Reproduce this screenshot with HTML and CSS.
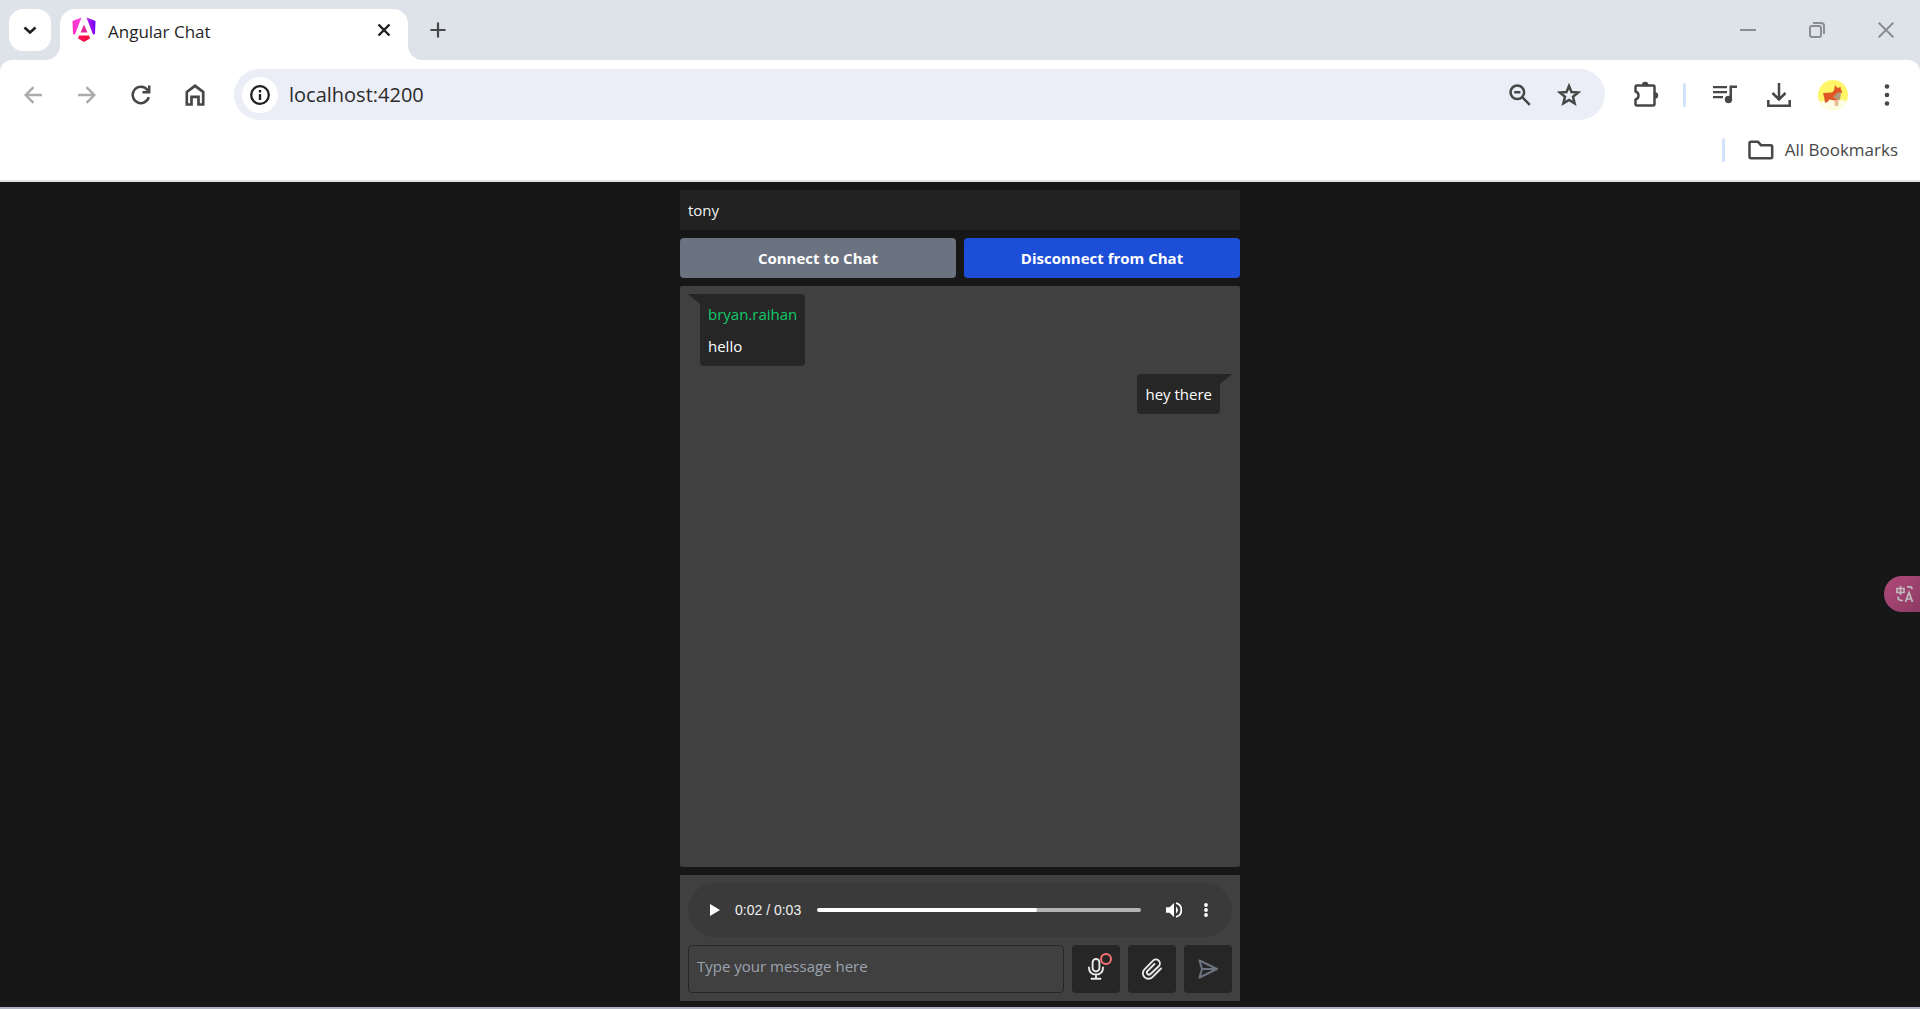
FILE: index.html
```
<!DOCTYPE html>
<html lang="en">
<head>
<meta charset="utf-8">
<meta name="viewport" content="width=device-width, initial-scale=1">
<title>Angular Chat</title>
<link rel="stylesheet" href="styles.css">
</head>
<body>
<div class="window">
  <header class="browser">
    <div class="tab-strip">
      <button class="tab-search" aria-label="Search tabs"><svg width="14" height="14" viewBox="0 0 14 14"><path d="M1.500 4.500 7 9.500l5.500-5" fill="none" stroke="#1f1f1f" stroke-width="2.600"/></svg></button>
      <div class="tab">
        <svg class="favicon" width="24" height="26" viewBox="0 0 24 26">
          <defs>
            <linearGradient id="ngA" gradientUnits="userSpaceOnUse" x1="0" y1="14" x2="24" y2="10"><stop offset="0" stop-color="#ff2fc0"/><stop offset=".4" stop-color="#ff41e0"/><stop offset=".7" stop-color="#b01cf0"/><stop offset="1" stop-color="#6c00f5"/></linearGradient>
            <linearGradient id="ngB" x1="0" y1="0" x2="1" y2="0"><stop offset="0" stop-color="#ff1060"/><stop offset="1" stop-color="#f0103a"/></linearGradient>
          </defs>
          <path d="M.500 4 9.500 .500 3 17.500 1 17zM14.500 .500l9 3.500-.500 13-2 .500z" fill="url(#ngA)"/>
          <path d="M12 7.500 15.500 15.500h-7z" fill="#e0289a"/>
          <path d="M7 18.500h10l1 3-6 3.500-6-3.500z" fill="url(#ngB)"/>
        </svg>
        <span class="tab-title">Angular Chat</span>
        <button class="tab-close" aria-label="Close tab"><svg width="14" height="14" viewBox="0 0 14 14"><path d="m1.500 1.500 11 11m0-11-11 11" stroke="#1f1f1f" stroke-width="2.400"/></svg></button>
      </div>
      <button class="new-tab" aria-label="New tab"><svg width="16" height="16" viewBox="0 0 16 16"><path d="M8 .500v15M.500 8h15" stroke="#474747" stroke-width="2.200"/></svg></button>
      <div class="window-controls">
        <button aria-label="Minimize"><svg width="16" height="16" viewBox="0 0 16 16"><path d="M0 8h16" stroke="#8a8d91" stroke-width="2"/></svg></button>
        <button aria-label="Restore"><svg width="16" height="16" viewBox="0 0 16 16" fill="none" stroke="#8a8d91" stroke-width="2"><rect x="1" y="4" width="11" height="11" rx="2"/><path d="M4 1h8q3 0 3 3v8"/></svg></button>
        <button aria-label="Close"><svg width="16" height="16" viewBox="0 0 16 16"><path d="m.700.700 14.600 14.600m0-14.600L.700 15.300" stroke="#8a8d91" stroke-width="2"/></svg></button>
      </div>
    </div>

    <div class="toolbar">
      <button class="tool" aria-label="Back"><svg width="18" height="18" viewBox="0 0 18 18" fill="none" stroke="#ababab" stroke-width="2.400"><path d="M18 9H1.800M9.500 1.200 1.700 9l7.800 7.800"/></svg></button>
      <button class="tool" aria-label="Forward"><svg width="18" height="18" viewBox="0 0 18 18" fill="none" stroke="#ababab" stroke-width="2.400"><path d="M0 9h16.200M8.500 1.200 16.300 9l-7.800 7.800"/></svg></button>
      <button class="tool" aria-label="Reload"><svg width="20" height="20" viewBox="0 0 20 20" fill="none" stroke="#474747" stroke-width="2.500"><path d="M17.800 12.200A8.200 8.200 0 1 1 16.500 5l1.200 1.700M18.200.500v6.700h-6.700"/></svg></button>
      <button class="tool" aria-label="Home"><svg width="20" height="22" viewBox="0 0 20 22" fill="none" stroke="#474747" stroke-width="2.700"><path d="M1.800 8 10 1.800 18.200 8v12.500h-4.700v-7.700h-7v7.700H1.800z"/></svg></button>
      <div class="omnibox">
        <button class="site-info" aria-label="Site information"><svg width="20" height="20" viewBox="0 0 20 20"><circle cx="10" cy="10" r="8.800" fill="none" stroke="#1f1f1f" stroke-width="2.300"/><path d="M8.800 9h2.400v6H8.800zM8.800 5h2.400v2.400H8.800z" fill="#1f1f1f"/></svg></button>
        <input class="address" type="text" value="localhost:4200" aria-label="Address">
        <button class="omni-tool" aria-label="Zoom"><svg width="22" height="22" viewBox="0 0 22 22" fill="none" stroke="#474747" stroke-width="2.500"><circle cx="8.300" cy="8.300" r="6.800"/><path d="m13.200 13.200 7.600 7.600M5.200 8.300h6.200"/></svg></button>
        <button class="omni-tool" aria-label="Bookmark this page"><svg width="24" height="24" viewBox="0 0 24 24" fill="none" stroke="#474747" stroke-width="2.500"><path d="m12 3 2.500 6.100 6.500.500-5 4.200 1.600 6.600L12 16.900 6.400 20.400 8 13.800l-5-4.200 6.500-.500z"/></svg></button>
      </div>
      <button class="tool extensions" aria-label="Extensions"><svg width="26" height="28" viewBox="0 0 26 28"><path d="M4 4.500h16q1.500 0 1.500 1.500v17q0 1.500-1.500 1.500H4q-1.500 0-1.500-1.500v-4.500c4-1 4-7 0-8V6Q2.500 4.500 4 4.500z" fill="none" stroke="#474747" stroke-width="2.500" stroke-linejoin="round"/><path d="M9 4a3.200 3.200 0 0 1 6.400 0zM22 11.200a3.200 3.200 0 0 1 0 6.400z" fill="#474747"/></svg></button>
      <span class="divider"></span>
      <button class="tool" aria-label="Media controls"><svg width="24" height="22" viewBox="0 0 24 22" fill="#474747"><path d="M0 2h14v2.300H0zM0 7h14v2.300H0zM0 12h10v2.300H0zM16.500 1.500H24V4h-5v11h-2.500z"/><circle cx="15.500" cy="15.500" r="3.700"/></svg></button>
      <button class="tool" aria-label="Downloads"><svg width="24" height="24" viewBox="0 0 24 24" fill="none" stroke="#474747" stroke-width="2.500"><path d="M12 0v16M5.500 10l6.500 6.500 6.500-6.500M1.300 17v5.700h21.400V17"/></svg></button>
      <button class="tool" aria-label="Profile"><svg width="30" height="30" viewBox="0 0 30 30"><defs><clipPath id="av"><circle cx="15" cy="15" r="15"/></clipPath></defs><g clip-path="url(#av)"><path d="M0 0h30v30H0z" fill="#fff566"/><path d="M0 22q15-5 30-1v9H0z" fill="#fcfde2"/></g><path d="M5 13l9-.500 2-2 1-5.500 2.500 3 3-1 .500 3 1.500 2-4 3-1 6-3-.500-5-1-2.500 3H7l-1-6z" fill="#de5724"/><path d="m19 13 4-1-1 8-4-1-3-2z" fill="#b39a7d"/><path d="M16 20h5l-1 6h-3z" fill="#e8bf98"/></svg></button>
      <button class="tool" aria-label="Menu"><svg width="6" height="22" viewBox="0 0 6 22" fill="#474747"><circle cx="3" cy="2.500" r="2.300"/><circle cx="3" cy="11" r="2.300"/><circle cx="3" cy="19.500" r="2.300"/></svg></button>
    </div>

    <div class="bookmarks">
      <span class="divider"></span>
      <button class="all-bookmarks"><svg width="26" height="20" viewBox="0 0 26 20"><path d="M3 1.800h7l3 3.400h9.700q1.500 0 1.500 1.500v10q0 1.500-1.500 1.500H3q-1.500 0-1.500-1.500V3.300Q1.500 1.800 3 1.800z" fill="none" stroke="#474747" stroke-width="2.500"/></svg>All Bookmarks</button>
    </div>
  </header>

  <main class="chat">
    <input class="username" type="text" value="tony" aria-label="User name">
    <div class="connection">
      <button class="btn btn-muted">Connect to Chat</button>
      <button class="btn btn-primary">Disconnect from Chat</button>
    </div>
    <section class="messages" aria-label="Messages">
      <article class="bubble received">
        <span class="sender">bryan.raihan</span>
        <span>hello</span>
      </article>
      <article class="bubble sent"><span>hey there</span></article>
    </section>
    <section class="composer">
      <div class="player">
        <button class="play" aria-label="Play"><svg width="10" height="12" viewBox="0 0 10 12"><path d="M0 0v12l10-6z" fill="#fff"/></svg></button>
        <span class="time">0:02 / 0:03</span>
        <input class="seek" type="range" min="0" max="324" value="219" aria-label="Seek">
        <button class="volume" aria-label="Volume"><svg width="16" height="16" viewBox="0 0 16 16"><path d="M0 5.300h3.500L8 1v14l-4.500-4.300H0z" fill="#fff"/><path d="M10 4.500q4 3.500 0 7z" fill="#fff"/><path d="M10 1.200a7 7 0 0 1 0 13.600" fill="none" stroke="#fff" stroke-width="1.800"/></svg></button>
        <button class="more" aria-label="More options"><svg width="4" height="14" viewBox="0 0 4 14" fill="#fff"><circle cx="2" cy="2" r="1.900"/><circle cx="2" cy="7" r="1.900"/><circle cx="2" cy="12" r="1.900"/></svg></button>
      </div>
      <form class="compose-row">
        <textarea class="message-input" rows="1" placeholder="Type your message here" aria-label="Message"></textarea>
        <button class="action" type="button" aria-label="Record"><svg width="16" height="22" viewBox="0 0 16 22" fill="none" stroke="#e8e8e8" stroke-width="1.900"><rect x="4.600" y="1" width="6.800" height="12.400" rx="3.400"/><path d="M1 9.500q0 7 7 7t7-7M8 17v3.500M3.500 20.800h9" stroke-linecap="round"/></svg><span class="record-dot"></span></button>
        <button class="action" type="button" aria-label="Attach file"><svg width="24" height="24" viewBox="0 0 24 24" fill="none" stroke="#e8e8e8" stroke-width="1.900" stroke-linecap="round" stroke-linejoin="round"><path d="m21 11.500-8.600 8.600a5.500 5.500 0 0 1-7.900-7.800l8.600-8.600a3.900 3.900 0 0 1 5.600 5.600L10.500 17a2.100 2.100 0 0 1-3-3l7-7"/></svg></button>
        <button class="action" type="submit" aria-label="Send"><svg width="20" height="20" viewBox="0 0 20 20" fill="none" stroke="#6b7280" stroke-width="2" stroke-linejoin="round"><path d="m1.500 1.500 17.500 8.500-17.500 8.500L4 10zM4 10h14"/></svg></button>
      </form>
    </section>
  </main>
</div>
<button class="translate" aria-label="Translate"><svg width="18" height="18" viewBox="0 0 18 18" fill="none" stroke="#c2bcbf" stroke-width="1.700"><path d="M1 3.500h7v4H1zM4.500 1v9M11 1.800h3q2 0 2 2.500M2 11.500q0 4 3.500 4h1.500M9.500 17 13 7.500l3.500 9.500M10.500 14h5"/></svg></button>
</body>
</html>
```
FILE: styles.css
```
* { box-sizing: border-box; }
body {
  margin: 0;
  background: #171717;
  font: 15px/24px "Open Sans", "Noto Sans", sans-serif;
}
button, input, textarea { margin: 0; padding: 0; border: 0; outline: 0; background: none; color: inherit; font: inherit; }
button { display: flex; align-items: center; justify-content: center; flex: none; }
svg { display: block; flex: none; }

.window { display: flex; flex-direction: column; min-height: 100vh; border-bottom: 2px solid #adb1c2; }

/* Browser chrome */
.browser { background: #dee2e9; border-bottom: 2px solid #e0e0e0; color: #474747; }
.tab-strip { display: flex; align-items: center; height: 60px; padding-left: 9px; }
.tab-search { width: 42px; height: 42px; border-radius: 14px; background: #fff; }
.tab {
  position: relative;
  display: flex;
  align-items: center;
  align-self: flex-end;
  width: 348px;
  height: 51px;
  margin-left: 9px;
  padding: 0 13px 9px 12px;
  border-radius: 15px 15px 0 0;
  background: #fff;
  color: #1f1f1f;
}
.tab::before, .tab::after { content: ""; position: absolute; bottom: 0; width: 15px; height: 15px; }
.tab::before { right: 100%; background: radial-gradient(circle at 0 0, transparent 15px, #fff 15px); }
.tab::after { left: 100%; background: radial-gradient(circle at 100% 0, transparent 15px, #fff 15px); }
.tab-title { flex: 1; margin-left: 12px; padding-top: 3px; font-size: 17px; }
.tab-close { width: 22px; height: 22px; }
.new-tab { width: 32px; height: 32px; margin-left: 14px; }
.window-controls { display: flex; margin-left: auto; }
.window-controls button { width: 69px; height: 58px; }

.toolbar { display: flex; align-items: center; height: 69px; padding: 0 6px; border-radius: 12px 12px 0 0; background: #fff; }
.tool { width: 54px; height: 51px; }
.omnibox {
  display: flex;
  align-items: center;
  flex: 1;
  min-width: 0;
  height: 51px;
  margin-left: 12px;
  padding: 0 12px 0 8px;
  border-radius: 26px;
  background: #ebeef7;
}
.site-info { width: 36px; height: 36px; border-radius: 50%; background: #fff; }
.address { flex: 1; min-width: 0; margin-left: 11px; color: #2b2b2b; font-size: 20px; }
.omni-tool { width: 49px; height: 51px; }
.extensions { margin-left: 14px; }
.divider { flex: none; width: 3px; height: 24px; border-radius: 2px; background: #d3e3fd; }
.toolbar .divider { margin: 0 12px 0 10px; }
.bookmarks { display: flex; align-items: center; justify-content: flex-end; gap: 23px; height: 51px; padding: 0 22px 9px 0; background: #fff; }
.all-bookmarks { gap: 11px; font-size: 17px; }

/* Chat page */
.chat {
  display: flex;
  flex: 1;
  flex-direction: column;
  gap: 8px;
  width: 100%;
  max-width: 576px;
  margin: 0 auto;
  padding: 8px 8px 6px;
  color: #fff;
}
.username { height: 40px; padding: 0 8px; border-radius: 2px; background: #222; color: #f0f0f0; }
.connection { display: grid; grid-template-columns: 1fr 1fr; gap: 8px; }
.btn { height: 40px; border-radius: 4px; font-weight: 700; }
.btn-muted { background: #6b7280; }
.btn-primary { background: #1d4ed8; }
.messages { display: flex; flex: 1; flex-direction: column; gap: 8px; padding: 8px 20px; border-radius: 2px; background: #404040; }
.bubble { position: relative; display: flex; flex-direction: column; gap: 8px; padding: 8px; border-radius: 4px; background: #262626; }
.bubble::before { content: ""; position: absolute; top: 0; width: 12px; height: 10px; background: #262626; }
.received { align-self: flex-start; border-top-left-radius: 0; }
.received::before { right: 100%; clip-path: polygon(0 0, 100% 0, 100% 100%); }
.sent { align-self: flex-end; border-top-right-radius: 0; }
.sent::before { left: 100%; clip-path: polygon(0 0, 100% 0, 0 100%); }
.sender { color: #12c96a; }
.composer { display: flex; flex-direction: column; gap: 8px; padding: 8px; background: #404040; }
.player { display: flex; align-items: center; height: 54px; padding: 0 20px; border-radius: 27px; background: #3a3a3a; }
.play { width: 14px; height: 32px; }
.time { margin-left: 13px; color: #f0f0f0; font: 14px/20px "Liberation Sans", Arial, sans-serif; }
.seek {
  appearance: none;
  flex: 1;
  min-width: 0;
  height: 4px;
  margin: 0 25px 0 16px;
  border-radius: 2px;
  background: linear-gradient(to right, #fff 67.6%, #b3b3b3 67.6%);
}
.seek::-webkit-slider-thumb { appearance: none; width: 4px; height: 4px; border-radius: 2px; background: #fff; }
.volume { width: 16px; height: 32px; }
.more { width: 12px; height: 32px; margin-left: 18px; }
.compose-row { display: flex; gap: 8px; margin: 0; }
.message-input { flex: 1; min-width: 0; height: 48px; padding: 8px; border: 1px solid #262626; border-radius: 4px; resize: none; overflow: hidden; }
.message-input::placeholder { color: #9ca3af; opacity: 1; }
.action { position: relative; width: 48px; height: 48px; border-radius: 4px; background: #262626; }
.record-dot { position: absolute; top: 8px; right: 8px; width: 12px; height: 12px; border: 2px solid #f87171; border-radius: 50%; }

.translate {
  position: fixed;
  top: 576px;
  right: 0;
  width: 36px;
  height: 36px;
  padding-left: 6px;
  border-radius: 18px 0 0 18px;
  background: linear-gradient(135deg, #b04a7a, #8d3a63);
}
```
